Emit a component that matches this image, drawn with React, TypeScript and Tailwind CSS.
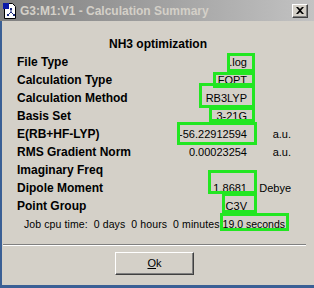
import React from "react";

type Row = { label: string; value: string; unit?: string; box?: string };

const ROWS: Row[] = [
  { label: "File Type", value: ".log", box: "-left-[2px] -right-[8px] top-0 -bottom-px" },
  { label: "Calculation Type", value: "FOPT", box: "-left-[5px] -right-[8px] top-px bottom-px" },
  { label: "Calculation Method", value: "RB3LYP", box: "-left-[7px] -right-[8px] -top-[6px] -bottom-px" },
  { label: "Basis Set", value: "3-21G", box: "-left-[7px] -right-[8px] top-0 bottom-[3px]" },
  { label: "E(RB+HF-LYP)", value: "-56.22912594", unit: "a.u.", box: "-left-[2px] -right-[10px] -top-[3px] -bottom-[2px]" },
  { label: "RMS Gradient Norm", value: "0.00023254", unit: "a.u." },
  { label: "Imaginary Freq", value: "" },
  { label: "Dipole Moment", value: "1.8681", unit: "Debye", box: "-left-[5px] -right-[10px] -top-[9px] bottom-[3px]" },
  { label: "Point Group", value: "C3V", box: "-left-[4px] -right-[10px] -top-[4px] bottom-[2px]" },
];

function GreenBox({ className }: { className: string }) {
  return <span className={`pointer-events-none absolute border-[3px] border-[#22e622] ${className}`} />;
}

function DocIcon() {
  return (
    <svg width="16" height="16" viewBox="0 0 16 16">
      <path d="M2.5 0.5h8l3 3v12h-11z" fill="#fff" stroke="#000" />
      <rect x="1" y="0" width="6" height="6" fill="#0a1aa8" />
      <path d="M9 6v3M9 9l-3 3M9 9l3 3" stroke="#1a2a7a" strokeWidth="1" fill="none" />
      <rect x="8" y="5" width="2" height="2" fill="#1a2a7a" />
      <rect x="5" y="11" width="2" height="2" fill="#1a2a7a" />
      <rect x="11" y="11" width="2" height="2" fill="#1a2a7a" />
    </svg>
  );
}

function CloseButton() {
  return (
    <div className="flex h-[14px] w-[16px] items-center justify-center border border-t-white border-l-white border-r-[#404040] border-b-[#404040] bg-[#d4d0c8] shadow-[inset_-1px_-1px_0_#808080]">
      <svg width="8" height="7" viewBox="0 0 8 7">
        <path d="M0 0h2l2 2 2-2h2L5 3.5 8 7H6L4 5 2 7H0l3-3.5z" fill="#000" />
      </svg>
    </div>
  );
}

export default function App() {
  return (
    <div className="h-[288px] w-[314px] overflow-hidden bg-[#3a5f95] font-['Liberation_Sans',Arial,sans-serif] text-black">
      {/* title bar */}
      <div className="flex h-[21px] items-center bg-gradient-to-r from-[#7f7f7f] to-[#c3c3c3] pl-[2px] pr-[6px]">
        <DocIcon />
        <span className="ml-[2px] text-[12px] font-bold text-[#d4d0c8]">G3:M1:V1 - Calculation Summary</span>
        <div className="ml-auto">
          <CloseButton />
        </div>
      </div>

      <div className="ml-[2px] h-[264px] bg-[#d4d0c8]">
        <div className="pt-[14px] text-center text-[12px] font-bold leading-[18px]">NH3 optimization</div>

        <div className="flex flex-col pl-[15px]">
          {ROWS.map((r) => (
            <div key={r.label} className="flex h-[18px] items-center leading-[18px]">
              <span className="w-[153px] text-[12px] font-bold">{r.label}</span>
              <span className="w-[77px] text-right text-[11px]">
                <span className="relative inline-block">
                  {r.value}
                  {r.box && <GreenBox className={r.box} />}
                </span>
              </span>
              <span className="w-[44px] text-right text-[11px]">{r.unit}</span>
            </div>
          ))}
          <div className="h-[18px] pl-[7px] text-[10.5px] leading-[18px] whitespace-pre">
            <span className="tracking-[0.1px]">Job cpu time:  0 days  0 hours  0 minutes </span>
            <span className="relative inline-block">
              19.0 seconds
              <GreenBox className="-left-[3px] -right-[4px] -top-[2px] bottom-[2px]" />
            </span>
          </div>
        </div>

        <div className="ml-px mr-[8px] mt-[11px] border-t border-b border-t-[#808080] border-b-white" />

        <div className="mt-[6px] flex justify-center pr-[7px]">
          <button className="h-[23px] w-[79px] border border-t-white border-l-white border-r-[#404040] border-b-[#404040] bg-[#d4d0c8] text-[11px] shadow-[inset_-1px_-1px_0_#808080]">
            <span className="underline">O</span>k
          </button>
        </div>
      </div>
    </div>
  );
}
